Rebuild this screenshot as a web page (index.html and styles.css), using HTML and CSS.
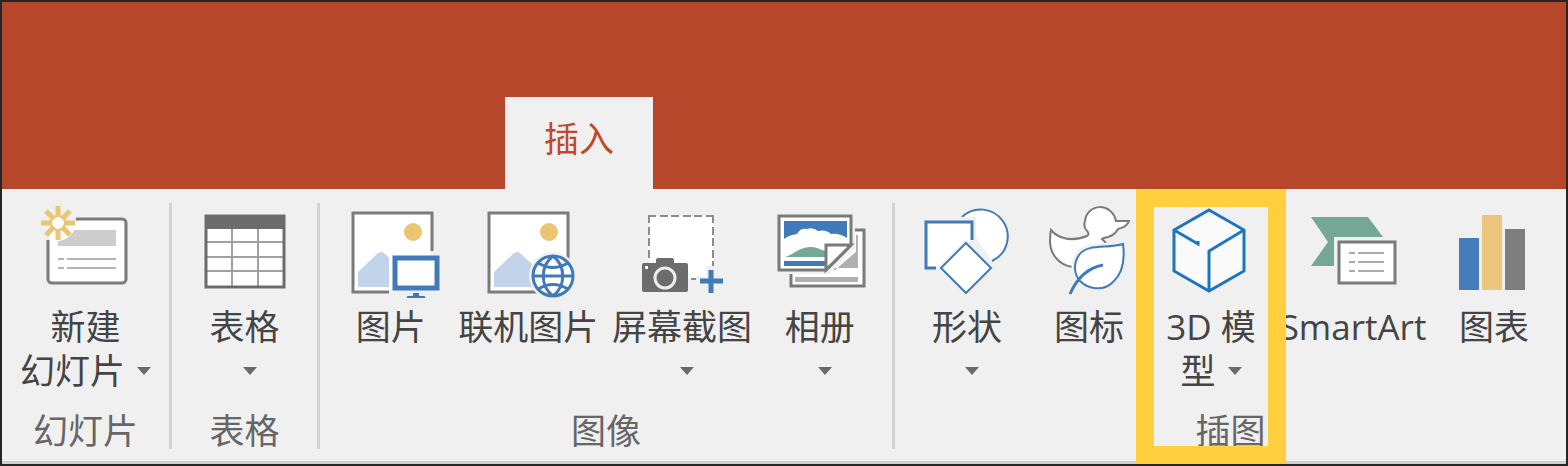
FILE: index.html
```html
<!DOCTYPE html>
<html lang="zh-CN">

<head>
    <meta charset="UTF-8" />
    <meta name="viewport" content="width=device-width, initial-scale=1" />
    <title>插入</title>
    <link rel="stylesheet" href="styles.css">
</head>

<body>
    <div class="window">
        <nav class="tabs">
            <a class="tab" href="#insert">插入</a>
        </nav>

        <main class="ribbon" id="insert">
            <section class="group">
                <div class="tools">
                    <button class="tool" type="button">
                        <svg class="icon" viewBox="0 0 96 92">
                            <rect x="10" y="14" width="78" height="64" rx="4" fill="#fff" stroke="#7a7a7a" stroke-width="3" />
                            <path d="M20 25h58v16H20z" fill="#cdcdcd" />
                            <path d="M20 54h6M29 54h49M20 63h6M29 63h49" stroke="#b4b4b4" stroke-width="2" />
                            <path d="M0 0h38v12q0 22-21 23H0z" fill="#f0f0f0" />
                            <path d="M12 16h26q0 18-21 21h-5z" fill="#fff" />
                            <circle cx="20" cy="18" r="6" fill="#fff" />
                            <path d="M20 1v11M20 24v11M3 18h11M26 18h11M8 6l8 8M24 22l8 8M32 6l-8 8M16 22l-8 8" stroke="#ecc573" stroke-width="5" />
                            <circle cx="20" cy="18" r="7" fill="none" stroke="#ecc573" stroke-width="2" />
                        </svg>
                        <span class="label">新建</span>
                        <span class="label">幻灯片<i class="caret"></i></span>
                    </button>
                </div>
                <h2 class="group-name">幻灯片</h2>
            </section>

            <section class="group">
                <div class="tools">
                    <button class="tool" type="button">
                        <svg class="icon" viewBox="0 0 96 92">
                            <rect x="9" y="11" width="78" height="70" fill="#fff" />
                            <path d="M35 24v57M61 24v57M9 37h78M9 52h78M9 66h78" stroke="#a0a0a0" stroke-width="2" />
                            <rect x="9" y="11" width="78" height="71" fill="none" stroke="#6c6c6c" stroke-width="3" />
                            <path d="M8 10h80v14H8z" fill="#6c6c6c" />
                        </svg>
                        <span class="label">表格</span>
                        <span class="label drop"><i class="caret"></i></span>
                    </button>
                </div>
                <h2 class="group-name">表格</h2>
            </section>

            <section class="group">
                <div class="tools tools-images">
                    <button class="tool" type="button">
                        <svg class="icon" viewBox="0 0 96 92">
                            <rect x="10" y="8" width="79" height="79" fill="#fff" stroke="#7a7a7a" stroke-width="3" />
                            <circle cx="70" cy="27" r="9" fill="#ecc573" />
                            <path d="M15 82V67l19-18q4-4 8 0l20 18v15z" fill="#c1d4e9" />
                            <path d="M46 46h54v50H46z" fill="#f0f0f0" />
                            <path d="M46 46h41v39H46z" fill="#fff" />
                            <rect x="52" y="53" width="42" height="30" fill="#fff" stroke="#407ab8" stroke-width="5" />
                            <path d="M70 88h6v3h6v2H64v-2h6z" fill="#407ab8" />
                        </svg>
                        <span class="label">图片</span>
                    </button>
                    <button class="tool" type="button">
                        <svg class="icon" viewBox="0 0 96 92">
                            <rect x="9" y="8" width="79" height="79" fill="#fff" stroke="#7a7a7a" stroke-width="3" />
                            <circle cx="69" cy="27" r="9" fill="#ecc573" />
                            <path d="M14 82V67l19-18q4-4 8 0l20 18v15z" fill="#c1d4e9" />
                            <circle cx="73" cy="71" r="24" fill="#f0f0f0" />
                            <circle cx="73" cy="71" r="20" fill="#fff" />
                            <g fill="none" stroke="#407ab8" stroke-width="3">
                                <circle cx="73" cy="71" r="20" />
                                <path d="M52 71h42M58 58q15 9 30 0M58 84q15-9 30 0" />
                                <path d="M73 51c-13 10-13 30 0 40M73 51c13 10 13 30 0 40" />
                            </g>
                        </svg>
                        <span class="label">联机图片</span>
                    </button>
                    <button class="tool" type="button">
                        <svg class="icon" viewBox="0 0 96 92">
                            <rect x="15" y="11" width="64" height="63" fill="#fff" />
                            <path d="M15 18v-7h7M72 11h7v7M26 11h8M37 11h8M49 11h8M60 11h8M15 22v8M15 33v8M15 45v8M79 22v8M79 33v8M79 45v8M79 56v6M57 74h6" fill="none" stroke="#8c8c8c" stroke-width="2" />
                            <path d="M8 60q0-2 2-2h12v-3q0-2 2-2h14q2 0 2 2v3h12q2 0 2 2v25q0 2-2 2H10q-2 0-2-2z" fill="#6c6c6c" />
                            <circle cx="31" cy="73" r="10" fill="none" stroke="#eee" stroke-width="3" />
                            <path d="M11 61h3v3h-3z" fill="#fff" />
                            <path d="M77 61v30M62 76h30" stroke="#f0f0f0" stroke-width="9" />
                            <path d="M77 65v23M66 76h23" stroke="#407ab8" stroke-width="5" />
                        </svg>
                        <span class="label">屏幕截图</span>
                        <span class="label drop"><i class="caret"></i></span>
                    </button>
                    <button class="tool" type="button">
                        <svg class="icon" viewBox="0 0 96 92">
                            <rect x="19" y="25" width="73" height="56" fill="#fff" stroke="#7a7a7a" stroke-width="3" />
                            <path d="M23 72h63v5H23zM62 66l24-21v18H62z" fill="#b0b0b0" />
                            <path d="M85 30v17" stroke="#b0b0b0" stroke-width="2" />
                            <path d="M3 7h80v36L57 69H3z" fill="#f0f0f0" />
                            <path d="M7 11h72v29L54 65H7z" fill="#fff" stroke="#7a7a7a" stroke-width="3" />
                            <path d="M12 16h63v17q-8-5-16-4-5-5-13-3-5-4-11-2-7-1-10 5-8 1-13 5z" fill="#407ab8" />
                            <path d="M13 52q6-2 12-6 11-6 20-3 5 2 8 3v6z" fill="#74a896" />
                            <path d="M12 56h41v5H12z" fill="#407ab8" />
                            <path d="M54 65V40h25z" fill="#fff" stroke="#7a7a7a" stroke-width="3" />
                        </svg>
                        <span class="label">相册</span>
                        <span class="label drop"><i class="caret"></i></span>
                    </button>
                </div>
                <h2 class="group-name">图像</h2>
            </section>

            <section class="group">
                <div class="tools tools-illustrations">
                    <button class="tool" type="button">
                        <svg class="icon" viewBox="0 0 96 92">
                            <g fill="#fff" stroke="#407ab8" stroke-width="2">
                                <path d="M43 12a27 27 0 1 1 30 44" />
                                <path d="M6 16h47v47H6z" stroke="#f0f0f0" stroke-width="8" />
                                <path d="M53 35V17H7v46h10" stroke-width="3" />
                                <path d="M47 34l29 29-29 29-29-29z" fill="#f0f0f0" stroke="none" />
                                <path d="M47 38l25 25-25 25-25-25z" />
                            </g>
                        </svg>
                        <span class="label">形状</span>
                        <span class="label drop"><i class="caret"></i></span>
                    </button>
                    <button class="tool" type="button">
                        <svg class="icon" viewBox="0 0 96 92">
                            <path d="M32 62C16 60 9 47 9 36q0-6 1-11 5 6 13 8 10 3 23-2 3-2 0-5-4-4-2-10C46-2 71-3 75 16h13q-2 6-11 8-3 6-10 8-5 1-6 2l4 4" fill="#fff" stroke="#7a7a7a" stroke-width="2" />
                            <path d="M82 39C66 44 47 38 38 50c-6 9-5 19 1 26 8 8 23 11 33 1 10-9 12-23 10-38z" fill="#fff" stroke="#f0f0f0" stroke-width="7" />
                            <path d="M82 39C66 44 47 38 38 50c-6 9-5 19 1 26 8 8 23 11 33 1 10-9 12-23 10-38z" fill="#fff" stroke="#407ab8" stroke-width="2" />
                            <path d="M62 60C46 63 36 73 29 89" fill="none" stroke="#407ab8" stroke-width="3" />
                        </svg>
                        <span class="label">图标</span>
                    </button>
                    <button class="tool marked" type="button">
                        <svg class="icon" viewBox="0 0 96 92">
                            <g fill="none" stroke="#1c75bf" stroke-width="3">
                                <path d="M46 5l35 20v41L46 86 11 66V25z" fill="#fafafa" />
                                <path d="M81 25L46 46v40M11 25l24 14v-3" />
                            </g>
                        </svg>
                        <span class="label">3D 模</span>
                        <span class="label">型<i class="caret"></i></span>
                    </button>
                    <button class="tool" type="button">
                        <svg class="icon" viewBox="0 0 96 92">
                            <path d="M6 12h57l15 20v29H6l17-24z" fill="#74a896" />
                            <path d="M29 32h66v51H29z" fill="#f0f0f0" />
                            <rect x="34" y="37" width="56" height="41" fill="#fff" stroke="#7a7a7a" stroke-width="3" />
                            <path d="M44 48h6M53 48h26M44 57h6M53 57h26M44 66h6M53 66h26" stroke="#acacac" stroke-width="2" />
                        </svg>
                        <span class="label">SmartArt</span>
                    </button>
                    <button class="tool" type="button">
                        <svg class="icon" viewBox="0 0 96 92">
                            <path d="M13 33h20v52H13z" fill="#447db9" />
                            <path d="M36 10h20v75H36z" fill="#ecc67d" />
                            <path d="M59 24h20v61H59z" fill="#7e7e7e" />
                        </svg>
                        <span class="label">图表</span>
                    </button>
                </div>
                <h2 class="group-name">插图</h2>
            </section>
        </main>
    </div>
</body>

</html>
```
FILE: styles.css
```css
* {
    box-sizing: border-box;
}

body {
    margin: 0;
    font-family: "Open Sans", "Noto Sans CJK SC", sans-serif;
    font-size: 35px;
    color: #444;
}

.window {
    border: 2px solid #262626;
    background-color: #f0f0f0;
}

.tabs {
    display: flex;
    padding: 95px 0 0 503px;
    background-color: #b7472a;
    border-bottom: 2px solid #fbf3f0;
}

.tab {
    margin-bottom: -2px;
    padding: 20px 39px 30px;
    line-height: 44px;
    color: #c0482c;
    background-color: #f0f0f0;
    text-decoration: none;
}

.ribbon {
    display: grid;
    grid-template-columns: 170fr 148fr 575fr 671fr;
    padding: 12px 0;
    border-bottom: 3px solid #cfcfcf;
}

.group {
    border-right: 3px solid #d4d4d4;
}

.group:last-child {
    border-right: none;
}

.tools {
    display: grid;
}

.tools-images {
    grid-template-columns: 136fr 138fr 168fr 109fr;
    padding: 0 18px 0 3px;
}

.tools-illustrations {
    grid-template-columns: 122fr 122fr 122fr 162fr 120fr;
    padding: 0 12px 0 11px;
}

.tool {
    display: flex;
    flex-direction: column;
    align-items: center;
    padding: 2px 0 0;
    border: none;
    background: none;
    font: inherit;
    color: inherit;
}

.icon {
    width: 96px;
    height: 92px;
    margin-bottom: 8px;
    overflow: visible;
}

.label {
    display: flex;
    align-items: center;
    height: 44px;
    line-height: 44px;
    white-space: nowrap;
}

.drop {
    padding-left: 10px;
}

.caret {
    border: 7px solid transparent;
    border-top: 8px solid #6a6a6a;
    border-bottom: none;
}

.label:not(.drop) .caret {
    margin-left: 12px;
}

.group-name {
    margin: 20px 0 0;
    font-size: 35px;
    font-weight: normal;
    line-height: 36px;
    text-align: center;
    color: #666;
}

/* yellow frame round the 3D model button */
.marked {
    position: relative;
}

.marked::after {
    content: "";
    position: absolute;
    top: -14px;
    bottom: -71px;
    left: -14px;
    right: -14px;
    z-index: 1;
    border: 18px solid #ffcf3d;
}
```
